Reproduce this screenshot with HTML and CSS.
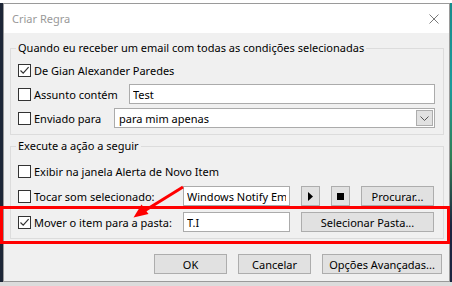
FILE: index.html
```html
<!DOCTYPE html>
<html lang="pt-BR">
<head>
    <meta charset="UTF-8">
    <meta name="viewport" content="width=device-width, initial-scale=1.0">
    <title>Criar Regra</title>
    <link rel="stylesheet" href="styles.css">
</head>
<body>

<div class="screen">
    <div class="behind"><span>Gian Alexander Paredes</span></div>

    <div class="desk">
        <div class="desk-left"></div>

        <div class="dialog">
            <div class="titlebar">
                <span class="title">Criar Regra</span>
                <svg class="close" width="10" height="10" viewBox="0 0 10 10"><path d="M0.5 0.5 L9.5 9.5 M9.5 0.5 L0.5 9.5"/></svg>
            </div>

            <div class="dialog-body">
                <fieldset class="group group-cond">
                    <legend>Quando eu receber um email com todas as condições selecionadas</legend>
                    <div class="row">
                        <label class="check"><span class="box"><svg width="11" height="11" viewBox="0 0 11 11"><path d="M1.5 5.5 L4.2 8.2 L9.6 2.2"/></svg></span>De Gian Alexander Paredes</label>
                    </div>
                    <div class="row">
                        <label class="check col-assunto"><span class="box"></span>Assunto contém</label>
                        <input class="field grow" type="text" value="Test">
                    </div>
                    <div class="row">
                        <label class="check col-enviado"><span class="box"></span>Enviado para</label>
                        <div class="field select grow">
                            <span>para mim apenas</span>
                            <span class="drop"><svg width="9" height="5" viewBox="0 0 9 5"><path d="M0.5 0.5 L4.5 4.5 L8.5 0.5"/></svg></span>
                        </div>
                    </div>
                </fieldset>

                <fieldset class="group group-acao">
                    <legend>Execute a ação a seguir</legend>
                    <div class="row">
                        <label class="check"><span class="box"></span>Exibir na janela Alerta de Novo Item</label>
                    </div>
                    <div class="row row-tall">
                        <label class="check col-acao"><span class="box"></span>Tocar som selecionado:</label>
                        <input class="field field-short" type="text" value="Windows Notify Email.wav">
                        <button class="btn btn-icon"><svg width="5" height="9" viewBox="0 0 5 9"><path class="fill" d="M0 0 L5 4.5 L0 9 Z"/></svg></button>
                        <button class="btn btn-icon"><svg width="7" height="7" viewBox="0 0 7 7"><rect class="fill" width="7" height="7"/></svg></button>
                        <button class="btn btn-procurar">Procurar...</button>
                    </div>
                    <div class="row row-tall">
                        <label class="check col-acao"><span class="box"><svg width="11" height="11" viewBox="0 0 11 11"><path d="M1.5 5.5 L4.2 8.2 L9.6 2.2"/></svg></span>Mover o item para a pasta:</label>
                        <input class="field field-short" type="text" value="T.I">
                        <button class="btn btn-pasta">Selecionar Pasta...</button>
                    </div>
                </fieldset>

                <div class="actions">
                    <button class="btn btn-ok">OK</button>
                    <button class="btn btn-ok">Cancelar</button>
                    <button class="btn btn-avancadas">Opções Avançadas...</button>
                </div>
            </div>
        </div>

        <div class="desk-right"></div>
    </div>

    <!-- marcação em vermelho por cima do print -->
    <div class="highlight"></div>
    <svg class="arrow" width="452" height="286" viewBox="0 0 452 286">
        <path d="M183 187 L145 210.5" />
        <polygon points="133.5,217.5 141.5,204.5 148.5,214"/>
    </svg>
</div>

</body>
</html>
```

FILE: styles.css
```css
body {
    margin: 0;
    font-family: "Noto Sans", Arial, sans-serif;
    font-size: 11px;
    color: #000;
}
.screen {
    position: relative;
    width: 452px;
    height: 286px;
    overflow: hidden;
    background-color: #dcdcdc;
}

/* janela que fica atras do dialogo */
.behind {
    height: 3px;
    overflow: hidden;
    background-color: #fff;
}
.behind span {
    display: block;
    margin-top: -13px;
    margin-left: -30px;
    font-family: "Liberation Sans", Arial, sans-serif;
    font-size: 17px;
    font-weight: bold;
    line-height: 16px;
    white-space: nowrap;
}
.desk {
    display: flex;
    height: 279px;
}
.desk-left {
    width: 3px;
    background-color: #1d2637;
}
.desk-right {
    width: 2px;
    background: linear-gradient(#188c8c, #1b9b9b 30%, #2f7f55 55%, #1b2440 80%);
}

/* dialogo */
.dialog {
    display: flex;
    flex-direction: column;
    width: 447px;
    box-sizing: border-box;
    border: 1px solid #9a9a9a;
    background-color: #f0f0f0;
}
.titlebar {
    display: flex;
    align-items: center;
    justify-content: space-between;
    height: 29px;
    padding: 0 10px 0 8px;
    background-color: #fff;
}
.title {
    color: #999;
    font-size: 11px;
}
.close path {
    stroke: #7a7a7a;
    stroke-width: 1;
    fill: none;
}
.dialog-body {
    flex: 1;
    padding: 7px 5px 0 6px;
}

/* caixas de grupo */
.group {
    margin: 0;
    padding: 2px 8px 4px 7px;
    min-width: 0;
    border: 1px solid #dcdcdc;
}
.group legend {
    margin-left: -2px;
    padding: 0 2px;
    line-height: 16px;
}
.group-acao {
    margin-top: 3px;
    padding-top: 5px;
    padding-bottom: 3px;
}
.row {
    display: flex;
    align-items: center;
    height: 24px;
}
.row-tall {
    height: 26px;
}
.check {
    display: flex;
    align-items: center;
    gap: 3px;
    white-space: nowrap;
}
.col-assunto {
    width: 111px;
}
.col-enviado {
    width: 96px;
}
.col-acao {
    width: 165px;
}
.box {
    display: flex;
    align-items: center;
    justify-content: center;
    width: 13px;
    height: 13px;
    box-sizing: border-box;
    border: 1px solid #333;
    background-color: #fff;
}
.box path {
    stroke: #333;
    stroke-width: 1.2;
    fill: none;
}

/* campos */
.field {
    height: 20px;
    box-sizing: border-box;
    margin: 0;
    padding: 0 3px;
    border: 1px solid #ababab;
    background-color: #fff;
    font: inherit;
    color: #000;
    outline: none;
}
.grow {
    flex: 1;
}
.select {
    display: flex;
    align-items: center;
    justify-content: space-between;
    padding: 0 1px 0 4px;
}
.drop {
    display: flex;
    align-items: center;
    justify-content: center;
    width: 17px;
    height: 16px;
    box-sizing: border-box;
    border: 1px solid #adadad;
    background-color: #e1e1e1;
}
.drop path {
    stroke: #555;
    stroke-width: 1;
    fill: none;
}
.field-short {
    width: 107px;
    margin-right: 11px;
}

/* botoes */
.btn {
    display: flex;
    align-items: center;
    justify-content: center;
    height: 20px;
    box-sizing: border-box;
    margin: 0;
    padding: 0;
    border: 1px solid #adadad;
    background-color: #e1e1e1;
    font: inherit;
    color: #000;
}
.btn-icon {
    width: 19px;
    margin-right: 11px;
}
.btn-icon .fill {
    fill: #000;
}
.btn-procurar {
    width: 73px;
}
.btn-pasta {
    width: 133px;
}
.actions {
    display: flex;
    justify-content: flex-end;
    gap: 11px;
    margin-top: 15px;
    padding-right: 2px;
}
.btn-ok {
    width: 73px;
}
.btn-avancadas {
    width: 120px;
}

/* destaque vermelho */
.highlight {
    position: absolute;
    left: 0;
    top: 206px;
    width: 450px;
    height: 38px;
    box-sizing: border-box;
    border: 3px solid #f00;
}
.arrow {
    position: absolute;
    left: 0;
    top: 0;
    pointer-events: none;
}
.arrow path {
    stroke: #f00;
    stroke-width: 3;
    fill: none;
}
.arrow polygon {
    fill: #f00;
}
```
